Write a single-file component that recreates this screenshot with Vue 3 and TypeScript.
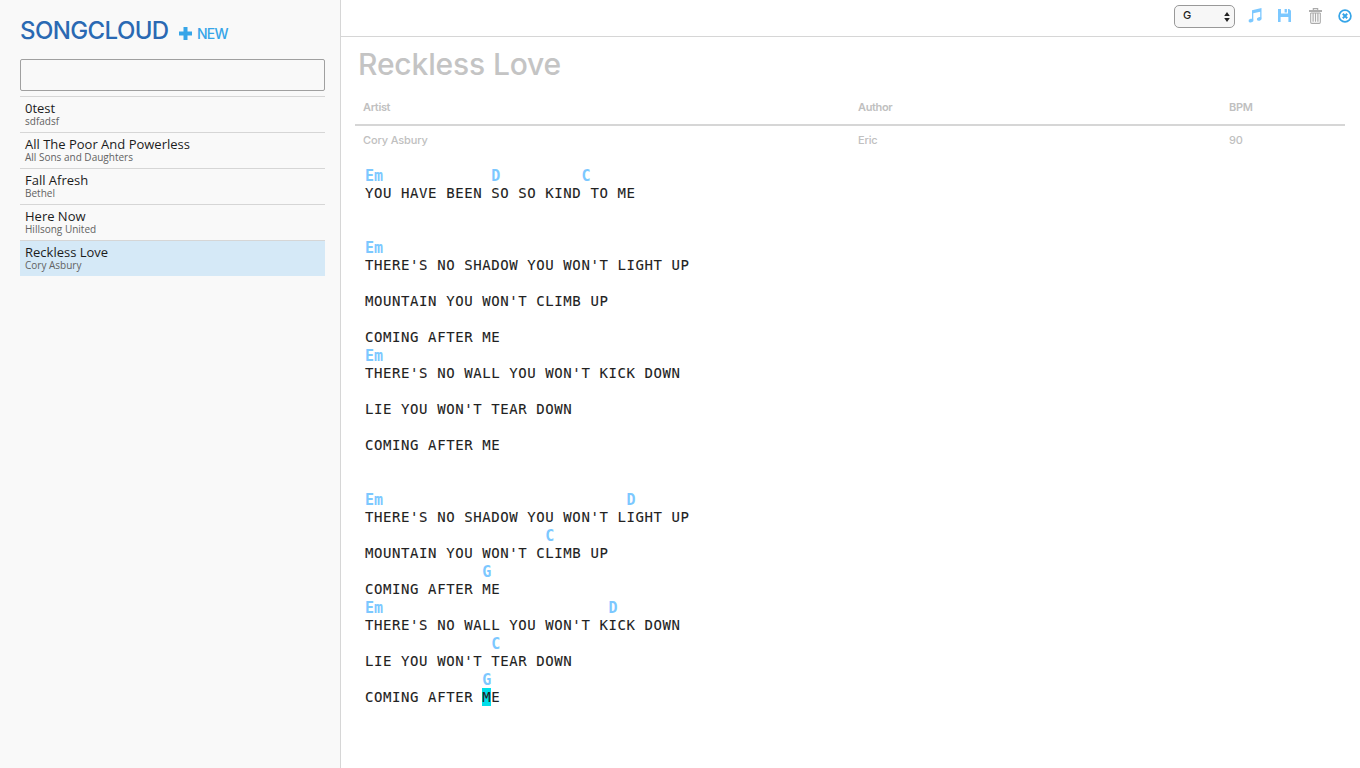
<script setup lang="ts">
interface Song { title: string; artist: string }
interface Part { text: string; mark: boolean }
interface Line { chord: boolean; parts: Part[] }

const songs: Song[] = [
  { title: '0test', artist: 'sdfadsf' },
  { title: 'All The Poor And Powerless', artist: 'All Sons and Daughters' },
  { title: 'Fall Afresh', artist: 'Bethel' },
  { title: 'Here Now', artist: 'Hillsong United' },
  { title: 'Reckless Love', artist: 'Cory Asbury' },
]
const active = 4

/* A leading "@" marks a chord row, square brackets mark the cursor cell. */
const source: string[] = [
  '@Em            D         C',
  'YOU HAVE BEEN SO SO KIND TO ME',
  '',
  '',
  '@Em',
  "THERE'S NO SHADOW YOU WON'T LIGHT UP",
  '',
  "MOUNTAIN YOU WON'T CLIMB UP",
  '',
  'COMING AFTER ME',
  '@Em',
  "THERE'S NO WALL YOU WON'T KICK DOWN",
  '',
  "LIE YOU WON'T TEAR DOWN",
  '',
  'COMING AFTER ME',
  '',
  '',
  '@Em                           D',
  "THERE'S NO SHADOW YOU WON'T LIGHT UP",
  '@                    C',
  "MOUNTAIN YOU WON'T CLIMB UP",
  '@             G',
  'COMING AFTER ME',
  '@Em                         D',
  "THERE'S NO WALL YOU WON'T KICK DOWN",
  '@              C',
  "LIE YOU WON'T TEAR DOWN",
  '@             G',
  'COMING AFTER [M]E',
]

const lines: Line[] = source.map((raw) => {
  const chord = raw.startsWith('@')
  const body = chord ? raw.slice(1) : raw
  return {
    chord,
    parts: body.split(/[[\]]/).map((text, i) => ({ text, mark: i % 2 === 1 })),
  }
})
</script>

<template>
  <div class="app">
    <aside class="sidebar">
      <header class="brand">
        <h1 class="logo">SONGCLOUD</h1>
        <a class="new">
          <svg class="plus" width="13" height="13" viewBox="0 0 13 13"><path d="M4.5 0h4v4.5H13v4H8.5V13h-4V8.5H0v-4h4.5z" fill="#36a5e8" /></svg>
          <span>NEW</span>
        </a>
      </header>
      <input class="search" type="text" />
      <ul class="songs">
        <li v-for="(s, i) in songs" :key="s.title" class="song" :class="{ active: i === active }">
          <div class="song-title">{{ s.title }}</div>
          <div class="song-artist">{{ s.artist }}</div>
        </li>
      </ul>
    </aside>

    <main class="main">
      <div class="toolbar">
        <div class="key">
          <span>G</span>
          <svg width="6" height="10" viewBox="0 0 6 10"><path d="M3 0l2.8 4H.2zM3 10L.2 6h5.6z" fill="#222" /></svg>
        </div>
        <svg class="note" width="14" height="15" viewBox="0 0 14 15" fill="#7cc8ff">
          <path d="M4 2.2L13.5 0v10.6h-1.3V3.7L5.3 5.3v7H4z" />
          <ellipse cx="3" cy="12.6" rx="2.5" ry="1.8" transform="rotate(-15 3 12.6)" />
          <ellipse cx="11.2" cy="10.9" rx="2.4" ry="1.8" transform="rotate(-15 11.2 10.9)" />
        </svg>
        <svg class="save" width="13" height="13" viewBox="0 0 13 13" fill="#7cc8ff">
          <path fill-rule="evenodd" d="M0 0h3v4.6h7V0h1.2L13 1.8V13h-2.6V8H2.6v5H0zM6.6 0h2.3v3.4H6.6z" />
        </svg>
        <svg class="trash" width="13" height="16" viewBox="0 0 13 16" fill="none" stroke="#aaa">
          <path d="M4.3 2.2V.6h4.4v1.6" stroke-width="1.1" />
          <path d="M0 3h13" stroke-width="1.9" />
          <path d="M1.7 5v9.2q0 1.2 1.1 1.2h7.4q1.1 0 1.1-1.2V5" stroke-width="1.1" />
          <path d="M1.7 5h9.6M4.1 5.2v8.6M6.5 5.2v8.6M8.9 5.2v8.6" stroke-width="1.2" />
        </svg>
        <svg class="close" width="14" height="14" viewBox="0 0 14 14" fill="none" stroke="#36a5e8">
          <circle cx="7" cy="7" r="5.9" stroke-width="1.7" />
          <path d="M4.8 4.8l4.4 4.4M9.2 4.8L4.8 9.2" stroke-width="2" />
        </svg>
      </div>

      <h2 class="title">Reckless Love</h2>
      <div class="meta head">
        <span>Artist</span><span>Author</span><span>BPM</span>
      </div>
      <div class="meta">
        <span>Cory Asbury</span><span>Eric</span><span>90</span>
      </div>

      <div class="lyrics">
        <div v-for="(l, i) in lines" :key="i" class="line" :class="{ chord: l.chord }"><span v-for="(p, j) in l.parts" :key="j" :class="{ cursor: p.mark }">{{ p.text }}</span></div>
      </div>
    </main>
  </div>
</template>

<style>
body { margin: 0; background: #fff; overflow: hidden; }
</style>

<style scoped>
* { box-sizing: border-box; }
.app { display: flex; width: 1360px; height: 768px; font-family: "Open Sans", "Noto Sans", sans-serif; }
.sidebar { width: 341px; padding: 0 15px 0 20px; background: #f9f9f9; border-right: 1px solid #d6d6d6; }
.brand { display: flex; height: 59px; padding-top: 16px; }
.logo { margin: 0; width: 158px; font: 500 24px/30px Inter, sans-serif; letter-spacing: -0.6px; color: #2a69b3; white-space: nowrap; }
.new { display: flex; padding-top: 8px; margin-left: 1px; color: #36a5e8; font: 500 14px/20px Inter, sans-serif; letter-spacing: -0.75px; }
.plus { margin: 3px 5px 0 0; }
.search { display: block; width: 305px; height: 32px; margin: 0 0 5px; border: 1px solid #a0a0a0; border-radius: 2px; background: #f9f9f9; outline: none; }
.songs { list-style: none; margin: 0; padding: 0; }
.song { height: 36px; padding: 4px 5px 0; border-top: 1px solid #d6d6d6; white-space: nowrap; }
.song.active { background: #d5e9f7; }
.song-title { font-size: 13px; line-height: 15px; color: #1c1c1c; }
.song-artist { font-size: 10px; line-height: 11px; color: #626262; }
.main { flex: 1; min-width: 0; }
.toolbar { display: flex; height: 37px; padding-left: 833px; border-bottom: 1px solid #d6d6d6; }
.toolbar > svg { flex: none; }
.key { display: flex; justify-content: space-between; align-items: center; flex: none; width: 61px; height: 23px; margin-top: 5px; padding: 0 4px 0 8px; border: 1px solid #999; border-radius: 5px; background: #f7f7f7; font: 500 11px/19px Inter, sans-serif; color: #222; }
.key span { padding-bottom: 2px; }
.note { margin: 8px 0 0 13px; }
.save { margin: 9px 0 0 16px; }
.trash { margin: 8px 0 0 18px; }
.close { margin: 9px 0 0 16px; }
.title { margin: 0; padding: 7px 0 0 17px; height: 54px; font: 500 30px/40px Inter, sans-serif; letter-spacing: -0.15px; color: #c4c4c4; }
.meta { display: grid; grid-template-columns: 495px 371px 1fr; margin: 0 15px 0 14px; padding: 7px 8px 0; height: 40px; font: 500 11px/14px Inter, sans-serif; letter-spacing: -0.15px; color: #c0c0c0; }
.head { height: 35px; padding-top: 9px; border-bottom: 2px solid #d6d6d6; font-weight: 600; letter-spacing: -0.35px; }
.lyrics { padding-left: 24px; color: #222; font: 14px/18px "DejaVu Sans Mono", monospace; letter-spacing: 0.587px; -webkit-text-stroke: 0.1px currentColor; }
.line { height: 18px; white-space: pre; }
.line span { display: inline-block; height: 18px; }
.chord { color: #7cc8ff; font-size: 15px; font-weight: 700; letter-spacing: -0.015px; -webkit-text-stroke: 0; }
.chord span { padding-top: 1px; }
.cursor { background: #00dfea; }
</style>
